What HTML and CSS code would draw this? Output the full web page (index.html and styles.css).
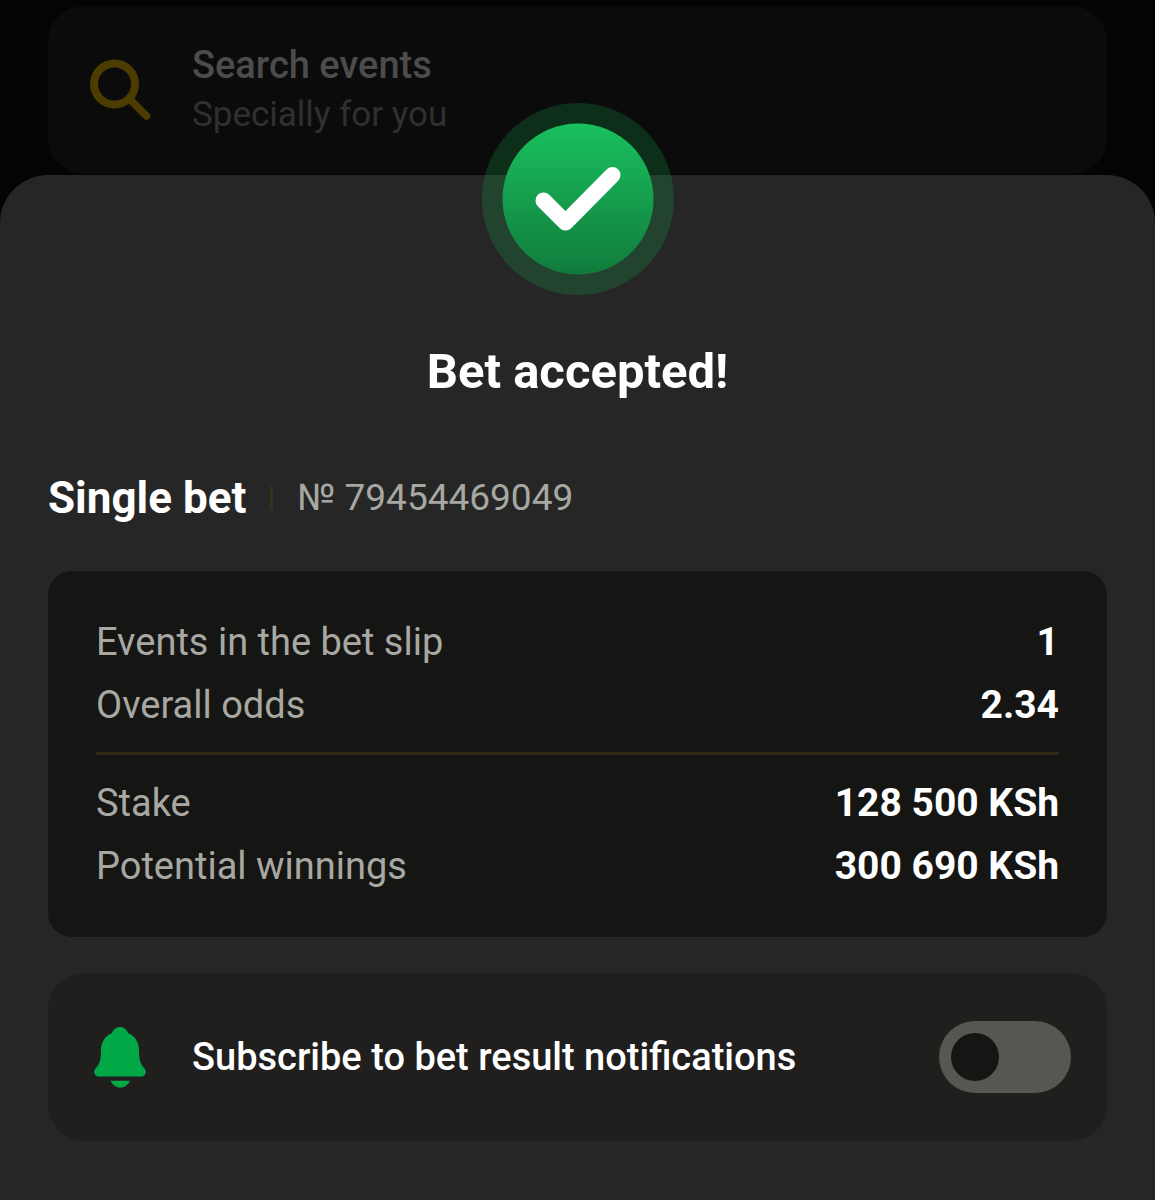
FILE: index.html
```html
<!DOCTYPE html>
<html lang="en">
<head>
<meta charset="utf-8">
<meta name="viewport" content="width=device-width, initial-scale=1">
<title>Bet accepted</title>
<link rel="stylesheet" href="styles.css">
</head>
<body>
<a class="card search" href="#events">
  <svg class="icon" viewBox="0 0 72 72" aria-hidden="true">
    <circle cx="30.500" cy="30" r="20.500" fill="none" stroke="#4d3c00" stroke-width="8"/>
    <path d="M46 45.500L62.500 62" fill="none" stroke="#4d3c00" stroke-width="7.500" stroke-linecap="round"/>
  </svg>
  <span class="search-text">
    <span class="search-title">Search events</span>
    <span class="search-note">Specially for you</span>
  </span>
</a>
<main class="sheet">
  <svg class="badge" viewBox="0 0 192 192" aria-hidden="true">
    <defs>
      <linearGradient id="badge-fill" x1="0" y1="0" x2="0" y2="1">
        <stop offset="0" stop-color="#19c15e"/>
        <stop offset="1" stop-color="#117b3c"/>
      </linearGradient>
    </defs>
    <circle cx="96" cy="96" r="96" fill="#15b354" fill-opacity=".22"/>
    <circle cx="96" cy="96" r="75.500" fill="url(#badge-fill)"/>
    <path d="M61.500 97.500L83.500 119.500L130.500 72" fill="none" stroke="#fff" stroke-width="16" stroke-linecap="round" stroke-linejoin="round"/>
  </svg>
  <h1 class="title">Bet accepted!</h1>
  <div class="bet">
    <h2 class="bet-type">Single bet</h2>
    <span class="bar"></span>
    <span class="bet-number">№ 79454469049</span>
  </div>
  <section class="details">
    <dl class="rows">
      <div class="row"><dt>Events in the bet slip</dt><dd>1</dd></div>
      <div class="row"><dt>Overall odds</dt><dd>2.34</dd></div>
    </dl>
    <dl class="rows rows-money">
      <div class="row"><dt>Stake</dt><dd>128 500 KSh</dd></div>
      <div class="row"><dt>Potential winnings</dt><dd>300 690 KSh</dd></div>
    </dl>
  </section>
  <div class="card subscribe">
    <svg class="icon" viewBox="0 0 72 72" aria-hidden="true">
      <path fill="#00a846" d="M36 6C40 6 42.500 8.500 44 12C51 15 55 21 55 29C55 38 56 43 60.500 47.500C62 49 62 51 61.700 52C61 54.500 59 55.600 57 55.600H15C13 55.600 11 54.500 10.300 52C10 51 10 49 11.500 47.500C16 43 17 38 17 29C17 21 21 15 28 12C29.500 8.500 32 6 36 6Z"/>
      <path fill="#00a846" d="M26.500 59.700H46C44 63.500 41 66.500 36.300 66.500S28.500 63.500 26.500 59.700Z"/>
    </svg>
    <label class="subscribe-label" for="notify">Subscribe to bet result notifications</label>
    <input class="switch" id="notify" type="checkbox" role="switch">
  </div>
</main>
</body>
</html>
```
FILE: styles.css
```css
* {
  box-sizing: border-box;
  margin: 0;
}

body {
  display: flex;
  flex-direction: column;
  min-height: 100vh;
  padding-top: 6px;
  background: #040404;
  color: #fff;
  font-family: Roboto, "Liberation Sans", sans-serif;
  font-size: 38px;
  line-height: 48px;
}

.card {
  display: flex;
  align-items: center;
  gap: 36px;
  min-height: 168px;
  padding: 32px 36px;
  border-radius: 36px;
}

.icon {
  flex: none;
  width: 72px;
  height: 72px;
}

.search {
  margin: 0 48px 1px;
  background: #0b0b0b;
  text-decoration: none;
}

.search-text {
  display: flex;
  flex-direction: column;
  gap: 2px;
}

.search-title {
  color: #4c4c4c;
  font-weight: 500;
}

.search-note {
  color: #303030;
  font-size: 35px;
}

.sheet {
  position: relative;
  flex: 1;
  display: flex;
  flex-direction: column;
  padding: 169px 48px 48px;
  border-radius: 48px 48px 0 0;
  background: #262626;
}

.badge {
  position: absolute;
  top: -72px;
  left: 50%;
  width: 192px;
  margin-left: -96px;
}

.title {
  font-size: 49px;
  font-weight: 700;
  line-height: 56px;
  text-align: center;
}

.bet {
  display: flex;
  align-items: center;
  gap: 24px;
  margin: 70px 0 45px;
}

.bet-type {
  font-size: 44px;
  font-weight: 700;
  line-height: 56px;
}

.bar {
  width: 3px;
  height: 24px;
  background: #37301c;
}

.bet-number {
  color: #a8a8a2;
  font-size: 37px;
}

.details {
  padding: 47px 48px;
  border-radius: 24px;
  background: #151513;
}

.rows {
  display: flex;
  flex-direction: column;
  gap: 15px;
}

.rows-money {
  margin-top: 23px;
  padding-top: 24px;
  border-top: 3px solid #2d2713;
}

.row {
  display: flex;
  justify-content: space-between;
}

.row dt {
  color: #a8a8a2;
}

.row dd {
  font-size: 39px;
  font-weight: 700;
}

.subscribe {
  margin-top: 36px;
  background: #211f1e;
}

.subscribe-label {
  flex: 1;
  font-weight: 500;
}

.switch {
  appearance: none;
  flex: none;
  display: flex;
  width: 132px;
  height: 72px;
  padding: 12px;
  border-radius: 36px;
  background: #575751;
}

.switch::before {
  content: "";
  width: 48px;
  height: 48px;
  border-radius: 50%;
  background: #151513;
}

.switch:checked {
  justify-content: flex-end;
  background: #00a846;
}
```
